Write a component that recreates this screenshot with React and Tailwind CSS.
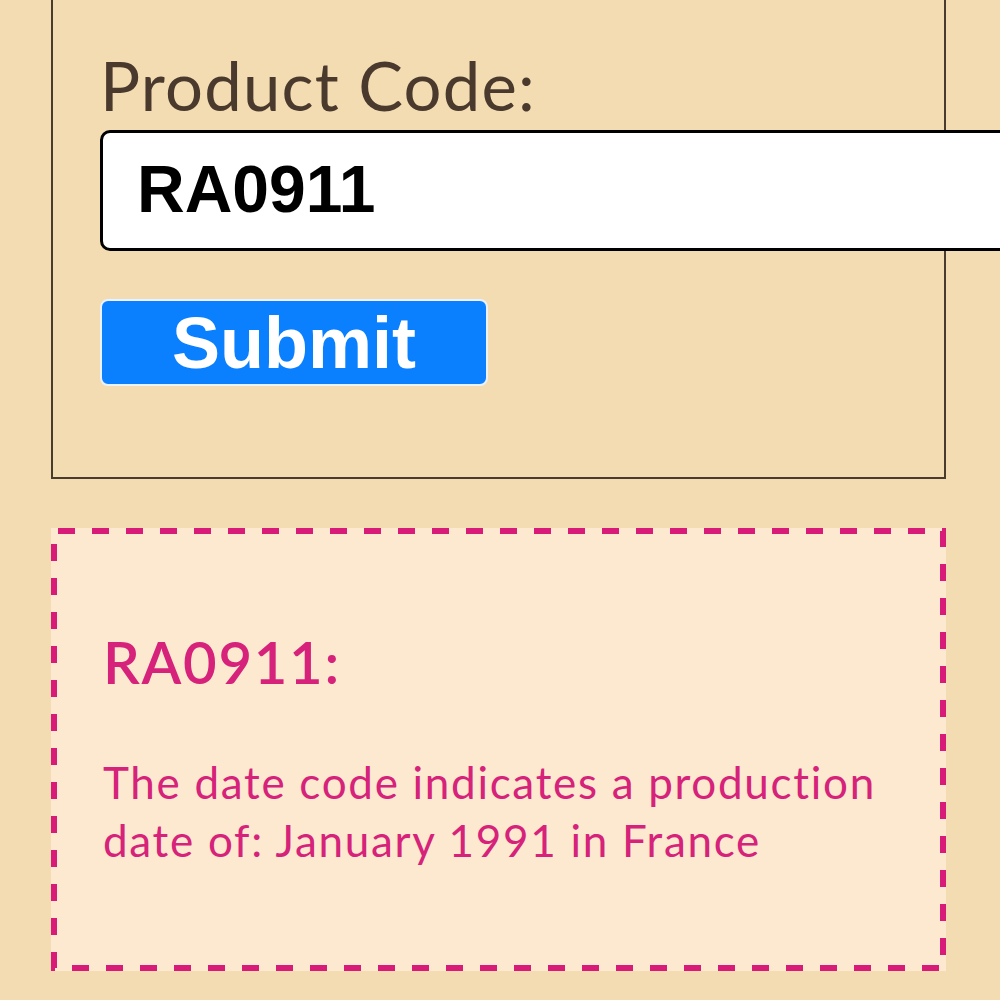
import { useState } from "react";

const App = () => {
    const [code, setCode] = useState("RA0911");

    return (
        <div className="w-[1000px] h-[1000px] overflow-hidden bg-[#f4dcb2] pl-[51px] font-['Lato',sans-serif]">
            {/* lookup form */}
            <div className="w-[895px] border-x-2 border-b-2 border-[#4a3b2f] pl-[47px] pt-[45px] pb-[91px]">
                <label className="block text-[67px] leading-[80px] tracking-[1.2px] text-[#4a3a2e]">Product Code:</label>
                <input
                    value={code}
                    onChange={(e) => setCode(e.target.value)}
                    className="mt-[5px] block w-[960px] h-[121px] rounded-[10px] border-[3px] border-black bg-white pl-[34px] pb-[4px] text-[66px] font-bold text-black outline-none font-['Liberation_Sans',sans-serif]"
                />
                <button className="mt-[48px] flex h-[87px] w-[388px] items-center justify-center rounded-[8px] border-2 border-[#eaf2ff] bg-[#0a80ff] text-[72px] font-bold text-white font-['Liberation_Sans',sans-serif]">
                    Submit
                </button>
            </div>

            {/* result */}
            <div className="relative mt-[49px] h-[443px] w-[895px] bg-[#fde9d0] pl-[52px] pt-[99px] text-[#d6227a]">
                <svg className="absolute inset-0 pointer-events-none" width="895" height="443">
                    <rect x="3" y="3" width="889" height="437" fill="none" stroke="#d81b78" strokeWidth="6" strokeDasharray="17 17" strokeDashoffset="-4" />
                </svg>
                <h2 className="text-[58px] leading-[70px] font-semibold tracking-[1.7px]">RA0911:</h2>
                <p className="mt-[56px] w-[800px] text-[44px] leading-[58px] tracking-[1.7px]">
                    The date code indicates a production date of: January 1991 in France
                </p>
            </div>
        </div>
    );
};

export default App;
